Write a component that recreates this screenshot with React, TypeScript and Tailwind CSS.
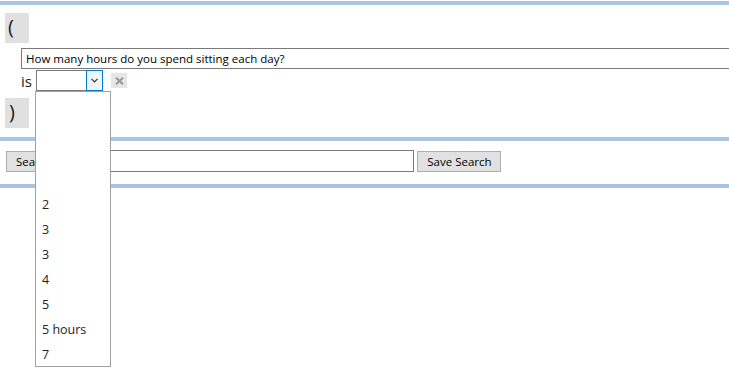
import React from "react";

const items = ["", "", "", "", "2", "3", "3", "4", "5", "5 hours", "7"];

export default function App() {
  return (
    <div
      className="relative w-[729px] h-[380px] overflow-hidden bg-white text-[#1a1a1a]"
      style={{ fontFamily: '"Open Sans", "Noto Sans", sans-serif' }}
    >
      <div className="mt-px border-t-4 border-[#a9c3e5]">
        <div className="ml-[5px] mt-[8px] w-[24px] h-[30px] bg-[#e0e0e0] text-[20px] leading-[28px] pl-[3px] text-[#222]">(</div>
        <div className="ml-[21px] mt-[5px] w-[720px] h-[21px] border border-[#7a7a7a] text-[11.5px] leading-[19px] pl-[4px] text-black">
          How many hours do you spend sitting each day?
        </div>
        <div className="flex items-start ml-[21px] mt-px h-[21px]">
          <span className="w-[15px] text-[15px] leading-[21px] mt-[1px]">is</span>
          <div className="flex w-[67px] h-[21px] border border-[#7a7a7a] bg-white">
            <div className="flex-1" />
            <div className="w-[17px] -my-px -mr-px h-[21px] border border-[#0078d7] bg-[#eef5fc] flex items-center justify-center">
              <svg width="7" height="5" viewBox="0 0 7 5">
                <path d="M0.5 0.8 L3.5 3.8 L6.5 0.8" stroke="#333" strokeWidth="1.2" fill="none" />
              </svg>
            </div>
          </div>
          <div className="ml-[8px] mt-[3px] w-[16px] h-[15px] bg-[#e6e6e6] flex items-center justify-center">
            <svg width="9" height="8" viewBox="0 0 9 8">
              <path d="M1 0.8 L8 7.2 M8 0.8 L1 7.2" stroke="#979797" strokeWidth="2" />
            </svg>
          </div>
        </div>
        <div className="ml-[5px] mt-[7px] w-[24px] h-[30px] bg-[#e0e0e0] text-[20px] leading-[28px] pl-[4px] text-[#222]">)</div>
        <div className="mt-[9px] border-t-4 border-[#a9c3e5]" />
        <div className="flex items-center ml-[6px] mt-[9px] h-[22px]">
          <button className="h-[21px] px-[9px] bg-[#e1e1e1] border border-[#adadad] text-[11.5px] leading-[19px] text-black">Search</button>
          <div className="ml-[3px] w-[349px] h-[22px] border border-[#7a7a7a] bg-white" />
          <button className="ml-[3px] h-[21px] w-[84px] bg-[#e1e1e1] border border-[#adadad] text-[11.5px] leading-[19px] text-black">Save Search</button>
        </div>
        <div className="mt-[12px] border-t-4 border-[#a9c3e5]" />
      </div>

      <div className="absolute left-[35px] top-[91px] w-[76px] h-[276px] border border-[#a0a0a0] bg-white">
        {items.map((t, i) => (
          <div key={i} className="h-[25px] pl-[6px] text-[12.5px] leading-[25px] text-[#222]">
            {t}
          </div>
        ))}
      </div>
    </div>
  );
}
